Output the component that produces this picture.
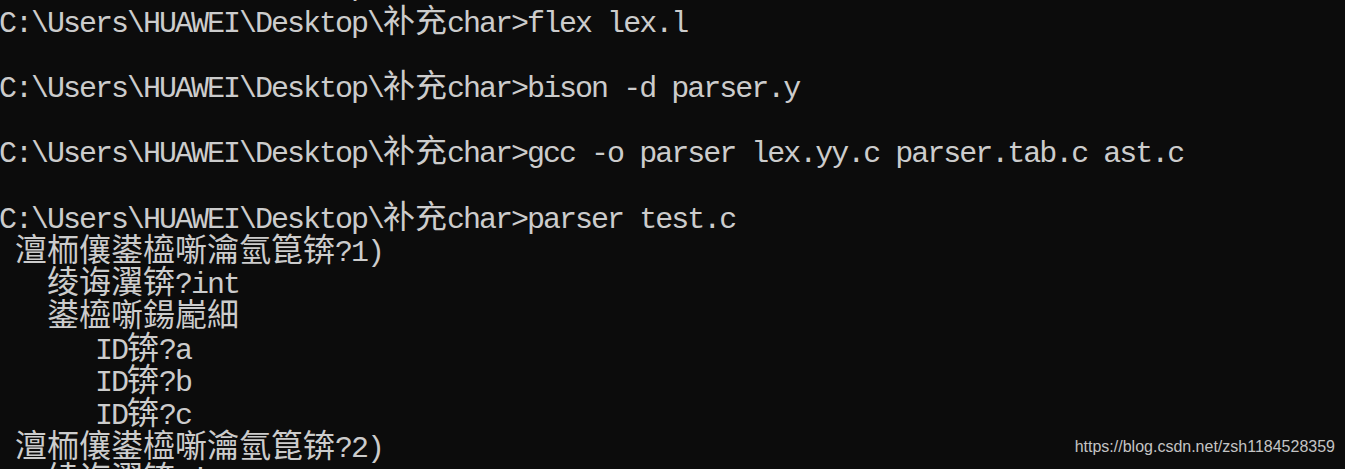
import React from "react";

const PROMPT = "C:\\Users\\HUAWEI\\Desktop\\补充char>";

const lines = [
  PROMPT + "flex lex.l",
  "",
  PROMPT + "bison -d parser.y",
  "",
  PROMPT + "gcc -o parser lex.yy.c parser.tab.c ast.c",
  "",
  PROMPT + "parser test.c",
  " 澶栭儴鍙橀噺瀹氫箟锛?1)",
  "   绫诲瀷锛?int",
  "   鍙橀噺鍚嶏細",
  "      ID锛?a",
  "      ID锛?b",
  "      ID锛?c",
  " 澶栭儴鍙橀噺瀹氫箟锛?2)",
  "   绫诲瀷锛?int",
];

// split a line into runs of half-width and full-width (CJK) text
const toRuns = (text) => {
  const runs = [];
  for (const ch of text) {
    const wide = ch.charCodeAt(0) > 0x2e80;
    const last = runs[runs.length - 1];
    if (last && last.wide === wide) last.text += ch;
    else runs.push({ wide, text: ch });
  }
  return runs;
};

const ConsoleLine = ({ text, tall }) => (
  <div className={`${tall ? "h-[36.7px]" : "h-[32.7px]"} leading-[32.7px] whitespace-pre`}>
    {toRuns(text).map((run, i) =>
      run.wide ? (
        <span
          key={i}
          className="text-[32px] leading-[0] tracking-normal font-['Noto_Sans_CJK_SC',sans-serif]"
        >
          {run.text}
        </span>
      ) : (
        <span key={i}>{run.text}</span>
      )
    )}
  </div>
);

export default function App() {
  return (
    <div className="relative h-[469px] w-[1345px] overflow-hidden bg-[#0c0c0c] text-[#cccccc]">
      <div className="mt-[-29px] ml-[-1px] text-[30px] tracking-[-2px] font-['Liberation_Mono','Noto_Sans_CJK_SC',monospace]">
        {/* previous prompt, scrolled mostly out of view */}
        <ConsoleLine text={PROMPT} tall />
        {lines.map((line, i) => (
          <ConsoleLine key={i} text={line} />
        ))}
      </div>

      {/* csdn watermark */}
      <div className="absolute right-[10px] bottom-[10px] text-[16px] text-[#c4c4c4] font-['Liberation_Sans',Arial,sans-serif]">
        https://blog.csdn.net/zsh1184528359
      </div>
    </div>
  );
}
